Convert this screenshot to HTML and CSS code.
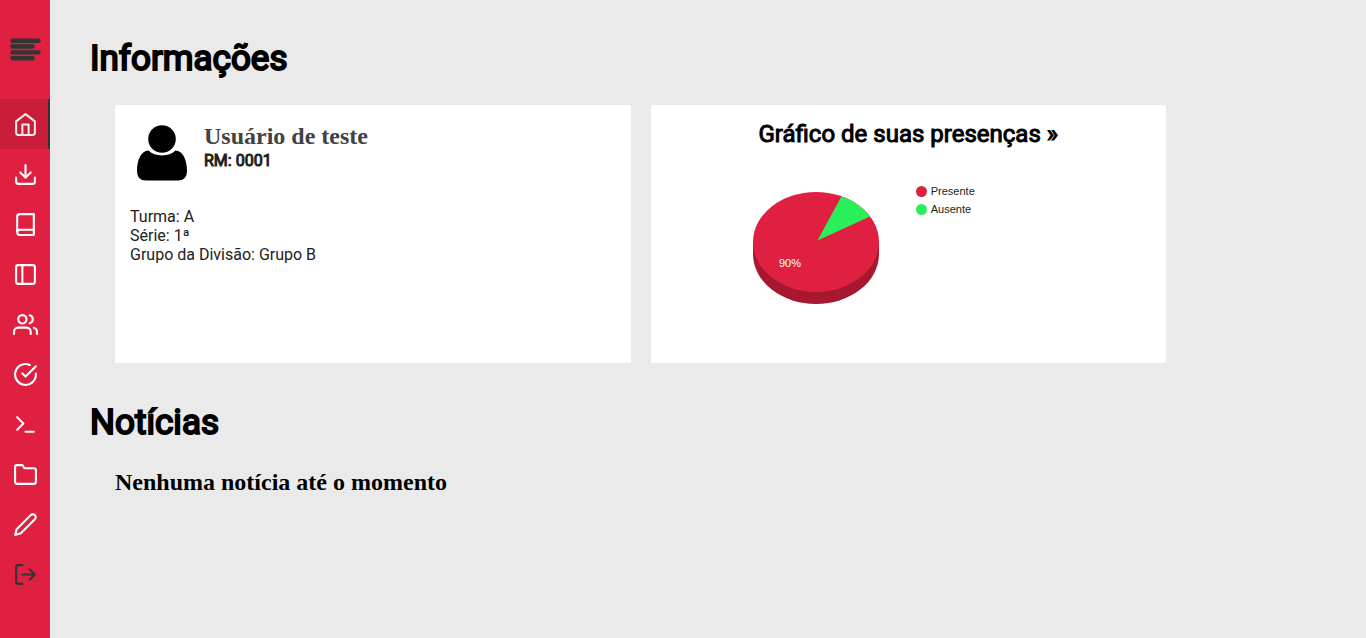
FILE: index.html
```html
<!DOCTYPE html>
<html lang="pt-BR">
<head>
<meta charset="utf-8">
<meta name="viewport" content="width=device-width, initial-scale=1">
<title>Informações</title>
<link rel="stylesheet" href="styles.css">
</head>
<body class="page">
<aside class="sidebar">
  <button class="menu-toggle" type="button" aria-label="Menu">
    <svg class="menu-icon" viewBox="0 0 32 24" aria-hidden="true"><path d="M3.500 2.700H29.500M3.500 8.500H23.500M3.500 14.400H29.500M3.500 20.200H23.500"/></svg>
  </button>
  <nav class="nav">
    <a class="nav-link nav-link-active" href="#" aria-label="Início"><svg class="icon" viewBox="0 0 24 24"><path d="M3 9l9-7 9 7v11a2 2 0 0 1-2 2H5a2 2 0 0 1-2-2z"/><path d="M9 22V12h6v10"/></svg></a>
    <a class="nav-link" href="#" aria-label="Downloads"><svg class="icon" viewBox="0 0 24 24"><path d="M21 15v4a2 2 0 0 1-2 2H5a2 2 0 0 1-2-2v-4M7 10l5 5 5-5M12 15V3"/></svg></a>
    <a class="nav-link" href="#" aria-label="Livros"><svg class="icon" viewBox="0 0 24 24"><path d="M4 19.5A2.5 2.5 0 0 1 6.500 17H20"/><path d="M6.500 2H20v20H6.500A2.500 2.500 0 0 1 4 19.500v-15A2.500 2.500 0 0 1 6.500 2z"/></svg></a>
    <a class="nav-link" href="#" aria-label="Painel"><svg class="icon" viewBox="0 0 24 24"><rect x="3" y="3" width="18" height="18" rx="2"/><path d="M9 3v18"/></svg></a>
    <a class="nav-link" href="#" aria-label="Turma"><svg class="icon" viewBox="0 0 24 24"><path d="M17 21v-2a4 4 0 0 0-4-4H5a4 4 0 0 0-4 4v2"/><circle cx="9" cy="7" r="4"/><path d="M23 21v-2a4 4 0 0 0-3-3.870M16 3.130a4 4 0 0 1 0 7.750"/></svg></a>
    <a class="nav-link" href="#" aria-label="Presenças"><svg class="icon" viewBox="0 0 24 24"><path d="M22 11.080V12a10 10 0 1 1-5.930-9.140"/><path d="M22 4L12 14.010l-3-3"/></svg></a>
    <a class="nav-link" href="#" aria-label="Terminal"><svg class="icon" viewBox="0 0 24 24"><path d="M4 17l6-6-6-6M12 19h8"/></svg></a>
    <a class="nav-link" href="#" aria-label="Arquivos"><svg class="icon" viewBox="0 0 24 24"><path d="M22 19a2 2 0 0 1-2 2H4a2 2 0 0 1-2-2V5a2 2 0 0 1 2-2h5l2 3h9a2 2 0 0 1 2 2z"/></svg></a>
    <a class="nav-link" href="#" aria-label="Editar"><svg class="icon" viewBox="0 0 24 24"><path d="M17 3a2.828 2.828 0 1 1 4 4L7.500 20.500 2 22l1.500-5.500L17 3z"/></svg></a>
    <a class="nav-link nav-link-exit" href="#" aria-label="Sair"><svg class="icon" viewBox="0 0 24 24"><path d="M9 21H5a2 2 0 0 1-2-2V5a2 2 0 0 1 2-2h4M16 17l5-5-5-5M21 12H9"/></svg></a>
  </nav>
</aside>
<main class="content">
  <h1 class="title">Informações</h1>
  <div class="cards">
    <section class="card profile">
      <div class="profile-head">
        <svg class="avatar" viewBox="0 0 50 56" aria-hidden="true"><circle cx="25" cy="14" r="13.800"/><path d="M11.500 25.500C18 32 32 32 38.500 25.500C46 26 50 35 50 46Q50 55.500 41 55.500H9Q0 55.500 0 46C0 35 4 26 11.500 25.500Z"/></svg>
        <div class="profile-id">
          <h2 class="user-name">Usuário de teste</h2>
          <p class="user-rm">RM: 0001</p>
        </div>
      </div>
      <div class="profile-data">
        <p class="line">Turma: A</p>
        <p class="line">Série: 1ª</p>
        <p class="line">Grupo da Divisão: Grupo B</p>
      </div>
    </section>
    <section class="card chart-card">
      <h2 class="chart-title">Gráfico de suas presenças »</h2>
      <div class="chart">
        <svg class="pie" viewBox="0 0 126 114" role="img" aria-label="Presente 90%">
          <path class="pie-side" d="M0 51V63A63 50 0 0 0 126 63V51Z"/>
          <ellipse class="pie-present" cx="63" cy="51" rx="63" ry="50"/>
          <path class="pie-absent" d="M64.500 49.500L88.500 5.300A63 50 0 0 1 117 25.500Z"/>
          <text class="pie-label" x="37" y="76" text-anchor="middle">90%</text>
        </svg>
        <ul class="legend">
          <li class="legend-item"><span class="dot dot-present"></span>Presente</li>
          <li class="legend-item"><span class="dot dot-absent"></span>Ausente</li>
        </ul>
      </div>
    </section>
  </div>
  <h1 class="title">Notícias</h1>
  <h2 class="news-empty">Nenhuma notícia até o momento</h2>
</main>
</body>
</html>
```
FILE: styles.css
```css
* { box-sizing: border-box; }
.page {
  margin: 0;
  min-height: 100vh;
  display: flex;
  background: #eaeaea;
  color: #212121;
  font: 16px/19px Roboto, sans-serif;
}
.sidebar {
  flex: 0 0 50px;
  background: #df2040;
}
.menu-toggle {
  display: flex;
  align-items: center;
  justify-content: center;
  width: 100%;
  height: 99px;
  padding: 0;
  border: 0;
  background: none;
}
.menu-icon {
  width: 32px;
  height: 24px;
  fill: none;
  stroke: #333;
  stroke-width: 4.4;
  stroke-linecap: round;
}
.nav { display: flex; flex-direction: column; }
.nav-link {
  display: flex;
  align-items: center;
  justify-content: center;
  height: 50px;
  color: #fff;
}
.nav-link-active {
  position: relative;
  background: #c91d3a;
  color: #e9e9e9;
}
.nav-link-active::after {
  content: "";
  position: absolute;
  inset: 0 0 0 auto;
  width: 2px;
  background: #333;
}
.nav-link-exit { color: #333; }
.icon {
  width: 25px;
  height: 25px;
  fill: none;
  stroke: currentColor;
  stroke-width: 2;
  stroke-linecap: round;
  stroke-linejoin: round;
}
.content {
  flex: 1;
  padding: 38px 200px 40px 40px;
}
.title {
  margin: 0;
  color: #000;
  font-size: 35px;
  font-weight: 400;
  line-height: 42px;
  -webkit-text-stroke: 2px currentColor;
}
.cards {
  display: grid;
  grid-template-columns: 1fr 1fr;
  gap: 20px;
  margin: 25px 0 39px 25px;
}
.card {
  min-height: 258px;
  padding: 15px;
  border-radius: 2px;
  background: #fff;
}
.profile-head { display: flex; gap: 17px; padding: 3px 0 0 7px; }
.avatar { width: 50px; height: 56px; margin-top: 2px; fill: #000; }
.user-name {
  margin: 0 0 1px;
  color: #424242;
  font: bold 24px/27px "Liberation Serif", serif;
}
.user-rm {
  margin: 0;
  -webkit-text-stroke: 1px currentColor;
}
.profile-data { margin-top: 26px; }
.line { margin: 0; }
.chart-title {
  margin: 0;
  color: #000;
  font-size: 24px;
  font-weight: 400;
  line-height: 28px;
  text-align: center;
  -webkit-text-stroke: 1px currentColor;
}
.chart {
  display: flex;
  justify-content: center;
  gap: 37px;
  padding-top: 34px;
}
.pie { width: 126px; height: 114px; margin-top: 9px; }
.pie-side { fill: #a71830; }
.pie-present { fill: #df2040; }
.pie-absent { fill: #2bee5b; }
.pie-label { fill: #fff; font: 11px "Liberation Sans", Arial, sans-serif; }
.legend {
  width: 148px;
  margin: 0;
  padding: 0;
  list-style: none;
  color: #222;
  font: 11px/18px "Liberation Sans", Arial, sans-serif;
}
.legend-item { display: flex; align-items: center; gap: 4px; }
.dot { width: 11px; height: 11px; border-radius: 50%; }
.dot-present { background: #df2040; }
.dot-absent { background: #2bee5b; }
.news-empty {
  margin: 25px 0 0 25px;
  color: #000;
  font: bold 24px/27px "Liberation Serif", serif;
}
```
